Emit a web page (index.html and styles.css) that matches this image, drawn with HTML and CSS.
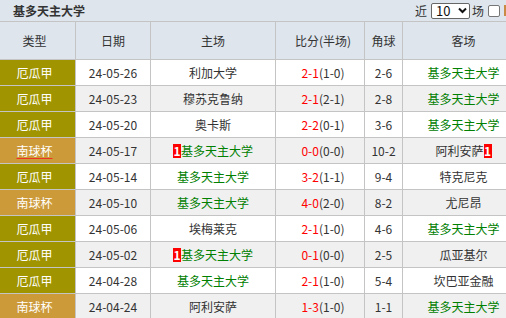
FILE: index.html
```html
<!DOCTYPE html>
<html lang="zh-CN">
<head>
<meta charset="utf-8">
<title>基多天主大学</title>
<link rel="stylesheet" href="styles.css">
</head>
<body>
<div class="wrap">
  <div class="titlebar">
    <span class="title">基多天主大学</span>
    <div class="controls">
      <span>近</span>
      <span class="select">10<svg width="9" height="7" viewBox="0 0 9 7"><path d="M1 1.5 L4.5 5 L8 1.5" fill="none" stroke="#111" stroke-width="2"/></svg></span>
      <span class="chang">场</span>
      <span class="checkbox"></span>
      <span class="orange" aria-hidden="true"></span>
    </div>
  </div>
  <div class="table">
    <div class="row head">
      <div class="c type">类型</div><div class="c">日期</div><div class="c">主场</div><div class="c score">比分(半场)</div><div class="c">角球</div><div class="c away">客场</div>
    </div>
    <div class="row">
      <div class="c type league">厄瓜甲</div><div class="c">24-05-26</div><div class="c">利加大学</div><div class="c score"><span class="red">2-1</span>(1-0)</div><div class="c">2-6</div><div class="c away green">基多天主大学</div>
    </div>
    <div class="row alt">
      <div class="c type league">厄瓜甲</div><div class="c">24-05-23</div><div class="c">穆苏克鲁纳</div><div class="c score"><span class="red">2-1</span>(2-1)</div><div class="c">2-8</div><div class="c away green">基多天主大学</div>
    </div>
    <div class="row">
      <div class="c type league">厄瓜甲</div><div class="c">24-05-20</div><div class="c">奥卡斯</div><div class="c score"><span class="red">2-2</span>(0-1)</div><div class="c">3-6</div><div class="c away green">基多天主大学</div>
    </div>
    <div class="row alt">
      <div class="c type cup"><span class="hover">南球杯</span></div><div class="c">24-05-17</div><div class="c green"><span class="rc">1</span>基多天主大学</div><div class="c score"><span class="red">0-0</span>(0-0)</div><div class="c">10-2</div><div class="c away">阿利安萨<span class="rc">1</span></div>
    </div>
    <div class="row">
      <div class="c type league">厄瓜甲</div><div class="c">24-05-14</div><div class="c green">基多天主大学</div><div class="c score"><span class="red">3-2</span>(1-1)</div><div class="c">9-4</div><div class="c away">特克尼克</div>
    </div>
    <div class="row alt">
      <div class="c type cup">南球杯</div><div class="c">24-05-10</div><div class="c green">基多天主大学</div><div class="c score"><span class="red">4-0</span>(2-0)</div><div class="c">8-2</div><div class="c away">尤尼昂</div>
    </div>
    <div class="row">
      <div class="c type league">厄瓜甲</div><div class="c">24-05-06</div><div class="c">埃梅莱克</div><div class="c score"><span class="red">2-1</span>(1-0)</div><div class="c">4-6</div><div class="c away green">基多天主大学</div>
    </div>
    <div class="row alt">
      <div class="c type league">厄瓜甲</div><div class="c">24-05-02</div><div class="c green"><span class="rc">1</span>基多天主大学</div><div class="c score"><span class="red">0-1</span>(0-0)</div><div class="c">2-5</div><div class="c away">瓜亚基尔</div>
    </div>
    <div class="row">
      <div class="c type league">厄瓜甲</div><div class="c">24-04-28</div><div class="c green">基多天主大学</div><div class="c score"><span class="red">2-1</span>(1-0)</div><div class="c">5-4</div><div class="c away">坎巴亚金融</div>
    </div>
    <div class="row alt">
      <div class="c type cup">南球杯</div><div class="c">24-04-24</div><div class="c">阿利安萨</div><div class="c score"><span class="red">1-3</span>(1-0)</div><div class="c">1-1</div><div class="c away green">基多天主大学</div>
    </div>
  </div>
</div>
</body>
</html>
```
FILE: styles.css
```css
html, body {
  margin: 0;
  padding: 0;
  background: #fff;
  overflow: hidden;
}
body {
  font-family: "Noto Sans CJK SC", "Noto Sans", sans-serif;
  font-size: 12px;
  color: #333;
}
.wrap {
  width: 515px;
}
.titlebar {
  height: 21px;
  background: #dee5ed;
  display: flex;
  align-items: center;
  justify-content: space-between;
  padding-left: 13px;
}
.title {
  font-weight: bold;
  color: #333;
  line-height: 21px;
}
.controls {
  display: flex;
  align-items: center;
  color: #333;
  line-height: 15px;
}
.select {
  display: inline-flex;
  align-items: center;
  justify-content: space-between;
  box-sizing: border-box;
  width: 39px;
  height: 16px;
  margin: 0 2px 0 4px;
  padding: 0 2px 0 4px;
  border: 1px solid #666;
  border-radius: 2px;
  background: #fff;
  color: #111;
  font-size: 13px;
}
.checkbox {
  box-sizing: border-box;
  width: 12px;
  height: 12px;
  margin-left: 4px;
  border: 1px solid #777;
  border-radius: 2px;
  background: #fff;
}
.orange {
  box-sizing: border-box;
  width: 11px;
  height: 11px;
  margin-left: 4px;
  border-left: 2px solid #c98a45;
}
.table {
  display: flex;
  flex-direction: column;
  gap: 1px;
  background: #c4c4c4;
  border-top: 1px solid #c4c4c4;
}
.row {
  display: grid;
  grid-template-columns: 75px 74px 124px 88px 37px 1fr;
  column-gap: 1px;
  height: 25px;
}
.row.head {
  height: 37px;
}
.c {
  display: flex;
  align-items: center;
  justify-content: center;
  background: #fff;
  white-space: nowrap;
}
.row.alt .c {
  background: #f0f0f0;
}
.row.head .c {
  background: #dee5ed;
  color: #333;
}
.type {
  padding-right: 6px;
}
.score {
  padding-left: 6px;
}
.away {
  padding-left: 9px;
}
.row .c.league {
  background: #a09400;
  color: #fff;
}
.row .c.cup {
  background: #cd9a3a;
  color: #fff;
}
.hover {
  text-decoration: underline;
  text-decoration-color: #ee3322;
  text-underline-offset: 2px;
}
.red {
  color: #f00;
}
.green {
  color: #008000;
}
.rc {
  display: inline-block;
  width: 8px;
  height: 14px;
  line-height: 14px;
  background: #f00;
  color: #fff;
  font-weight: bold;
  text-align: center;
}
```
